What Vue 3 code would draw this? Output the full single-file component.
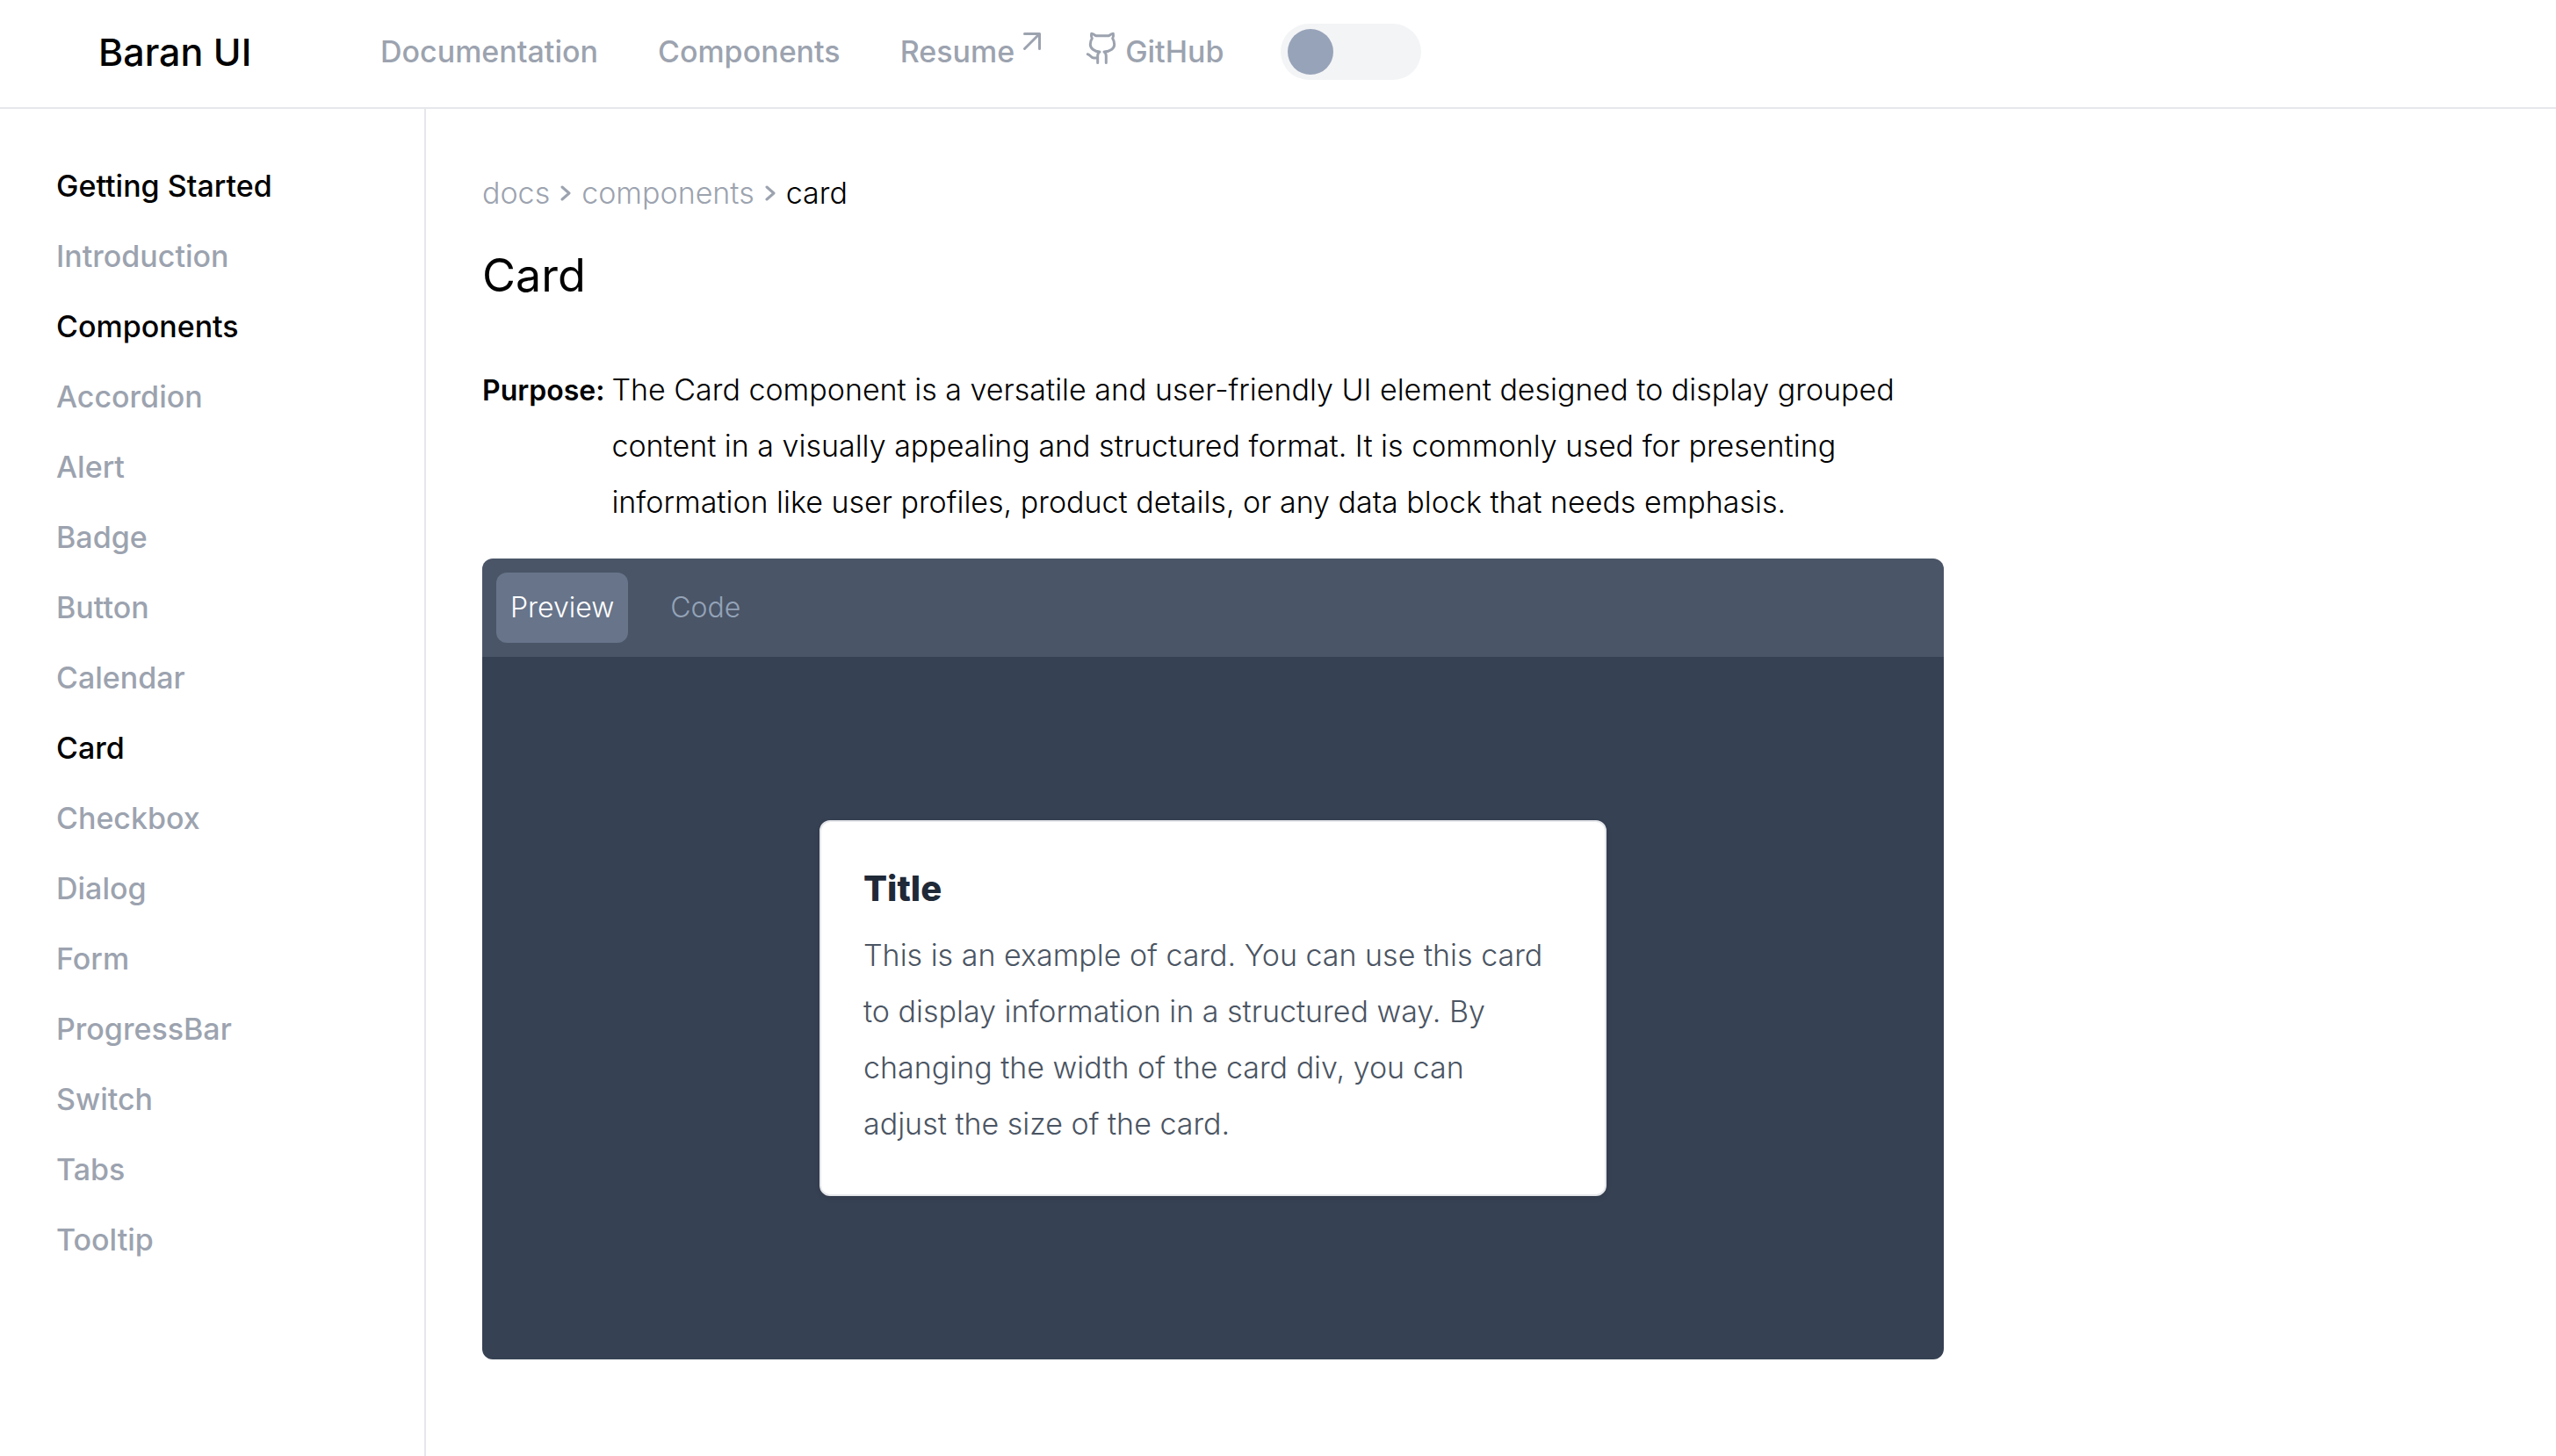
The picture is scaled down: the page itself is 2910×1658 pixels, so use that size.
<script setup>
import { ref } from 'vue'

const navLinks = ['Documentation', 'Components']
const sections = [
  { title: 'Getting Started', items: ['Introduction'] },
  {
    title: 'Components',
    items: [
      'Accordion', 'Alert', 'Badge', 'Button', 'Calendar', 'Card', 'Checkbox',
      'Dialog', 'Form', 'ProgressBar', 'Switch', 'Tabs', 'Tooltip',
    ],
  },
]
const current = 'Card'
const tabs = ['Preview', 'Code']
const activeTab = ref('Preview')
const dark = ref(false)
</script>

<template>
  <div class="page">
    <header class="topbar">
      <a class="brand" href="#">Baran UI</a>
      <nav class="nav" aria-label="Main">
        <a v-for="link in navLinks" :key="link" href="#">{{ link }}</a>
        <a class="resume" href="#">
          Resume
          <svg class="arrow" viewBox="0 0 24 24" aria-hidden="true">
            <path d="M3.500 3.500H20.500V20.500M20.500 3.500L3.500 20.500" />
          </svg>
        </a>
        <a class="github" href="#">
          <svg class="cat" viewBox="0 0 38 40" aria-hidden="true">
            <path d="M14.700 36.500V28.500C14.700 26.500 15.500 25 17 24C10.500 23.500 6.300 20 6.300 15.500C6.300 12.500 7 10.500 8.300 8.800C7.300 7 7.200 5 7.700 3.200C9.500 3.200 11 4.500 12.500 5.700H27.500C29 4.500 30.500 3.200 32.300 3.200C32.800 5 32.700 7 31.700 8.800C33 10.500 33.700 12.500 33.700 15.500C33.700 20 29.500 23.500 22 24C23.500 25 24.300 26.500 24.300 28.500V36.500M3.300 26.700C6 27 7 30.800 10 31H14.700" />
          </svg>
          GitHub
        </a>
      </nav>
      <input v-model="dark" class="switch" type="checkbox" role="switch" aria-label="Dark mode" />
    </header>

    <div class="body">
      <aside class="sidebar">
        <template v-for="section in sections" :key="section.title">
          <h2>{{ section.title }}</h2>
          <a
            v-for="item in section.items"
            :key="item"
            href="#"
            :class="{ current: item === current }"
          >{{ item }}</a>
        </template>
      </aside>

      <main class="content">
        <nav class="crumbs" aria-label="Breadcrumb">
          <a href="#">docs</a>
          <svg class="chevron" viewBox="0 0 12 18" aria-hidden="true"><path d="M2 2L10 9L2 16" /></svg>
          <a href="#">components</a>
          <svg class="chevron" viewBox="0 0 12 18" aria-hidden="true"><path d="M2 2L10 9L2 16" /></svg>
          <span aria-current="page">card</span>
        </nav>
        <h1>Card</h1>
        <div class="purpose">
          <strong>Purpose:</strong>
          <p>
            The Card component is a versatile and user-friendly UI element designed to display grouped
            content in a visually appealing and structured format. It is commonly used for presenting
            information like user profiles, product details, or any data block that needs emphasis.
          </p>
        </div>

        <section class="panel">
          <div class="tabs" role="tablist">
            <button
              v-for="tab in tabs"
              :key="tab"
              type="button"
              role="tab"
              :aria-selected="tab === activeTab"
              :class="{ active: tab === activeTab }"
              @click="activeTab = tab"
            >{{ tab }}</button>
          </div>
          <div class="stage">
            <article class="card">
              <h3>Title</h3>
              <p>
                This is an example of card. You can use this card to display information in a
                structured way. By changing the width of the card div, you can adjust the size of
                the card.
              </p>
            </article>
          </div>
        </section>
      </main>
    </div>
  </div>
</template>

<style>
body {
  background: #fff;
}
</style>

<style scoped>
* {
  box-sizing: border-box;
}
.page {
  display: flex;
  flex-direction: column;
  min-height: 100vh;
  font-family: Inter, "Open Sans", sans-serif;
  font-size: 34px;
  line-height: 64px;
  color: #000;
}
a {
  color: inherit;
  text-decoration: none;
}
h1, h2, h3, p {
  margin: 0;
}
svg {
  flex: none;
  fill: none;
  stroke: currentColor;
  stroke-width: 3;
  stroke-linecap: round;
  stroke-linejoin: round;
}
.topbar {
  display: flex;
  align-items: center;
  height: 124px;
  padding: 0 64px 4px 112px;
  border-bottom: 2px solid #e5e7eb;
}
.brand {
  width: 321px;
  font-size: 43px;
  font-weight: 500;
}
.nav {
  display: flex;
  gap: 68px;
  font-weight: 500;
  color: #9ca3af;
}
.resume, .github {
  display: flex;
  gap: 8px;
}
.resume {
  margin-right: -20px;
}
.arrow {
  width: 24px;
  height: 24px;
  margin-top: 8px;
}
.cat {
  width: 38px;
  height: 40px;
  margin-top: 8px;
}
.switch {
  appearance: none;
  width: 160px;
  height: 64px;
  margin: 0 0 0 64px;
  padding: 6px 8px;
  border-radius: 32px;
  background: #f3f4f6;
}
.switch::before {
  content: "";
  display: block;
  width: 52px;
  height: 52px;
  border-radius: 50%;
  background: #97a3b8;
}
.switch:checked::before {
  margin-left: auto;
}
.body {
  display: flex;
  flex: 1;
}
.sidebar {
  display: flex;
  flex-direction: column;
  gap: 16px;
  width: 485px;
  padding: 56px 64px;
  border-right: 2px solid #e5e7eb;
  font-weight: 500;
  color: #9ca3af;
}
.sidebar h2 {
  font-size: 34px;
  font-weight: 500;
  color: #000;
}
.sidebar .current {
  color: #000;
}
.content {
  flex: 1;
  max-width: 1792px;
  padding: 64px;
  font-weight: 300;
}
.crumbs {
  display: flex;
  align-items: center;
  gap: 12px;
  color: #9ca3af;
}
.crumbs span {
  color: #000;
}
.chevron {
  width: 12px;
  height: 18px;
}
h1 {
  margin: 30px 0 66px;
  font-size: 52px;
  font-weight: 400;
}
.purpose {
  display: flex;
  align-items: baseline;
  gap: 8px;
}
.purpose strong {
  font-size: 32px;
  font-weight: 600;
}
.panel {
  margin-top: 32px;
  border-radius: 12px;
  overflow: hidden;
}
.tabs {
  display: flex;
  gap: 32px;
  padding: 16px;
  background: #4a5567;
}
.tabs button {
  height: 80px;
  padding: 0 16px;
  border: 0;
  border-radius: 12px;
  background: none;
  font: inherit;
  font-size: 32px;
  color: #94a3b8;
}
.tabs .active {
  background: #67748a;
  color: #fff;
}
.stage {
  display: flex;
  align-items: center;
  justify-content: center;
  height: 800px;
  background: #364153;
}
.card {
  width: 896px;
  padding: 48px 64px 48px 48px;
  border: 2px solid #e5e7eb;
  border-radius: 12px;
  background: #fff;
  color: #4b5563;
  box-shadow: 0 2px 6px rgba(0, 0, 0, 0.1);
}
.card h3 {
  margin-bottom: 16px;
  font-size: 40px;
  line-height: 56px;
  font-weight: 800;
  color: #1f2937;
}
</style>
